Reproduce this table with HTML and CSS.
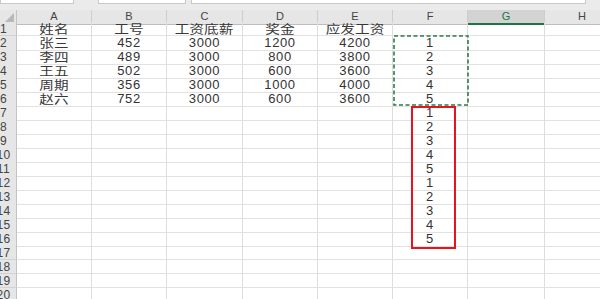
FILE: index.html
```html
<!DOCTYPE html>
<html lang="zh">
<head>
<meta charset="utf-8">
<link rel="stylesheet" href="styles.css">
</head>
<body>
<div class="topbar">
  <div class="box box-name"></div>
  <div class="box box-mid"></div>
  <div class="box box-formula"></div>
</div>
<div class="sheet">
  <div class="row head">
    <span class="corner"><svg width="9" height="9" viewBox="0 0 9 9"><path d="M9 0V9H0Z" fill="#b8b8b8"/></svg></span>
    <span>A</span><span>B</span><span>C</span><span>D</span><span>E</span><span>F</span><span class="sel">G</span><span>H</span>
  </div>
  <div class="row"><span class="rh">1</span><span class="zh"><b>姓名</b></span><span class="zh"><b>工号</b></span><span class="zh"><b>工资底薪</b></span><span class="zh"><b>奖金</b></span><span class="zh"><b>应发工资</b></span><span></span><span></span><span></span></div>
  <div class="row"><span class="rh">2</span><span class="zh"><b>张三</b></span><span>452</span><span>3000</span><span>1200</span><span>4200</span><span>1</span><span></span><span></span></div>
  <div class="row"><span class="rh">3</span><span class="zh"><b>李四</b></span><span>489</span><span>3000</span><span>800</span><span>3800</span><span>2</span><span></span><span></span></div>
  <div class="row"><span class="rh">4</span><span class="zh"><b>王五</b></span><span>502</span><span>3000</span><span>600</span><span>3600</span><span>3</span><span></span><span></span></div>
  <div class="row"><span class="rh">5</span><span class="zh"><b>周期</b></span><span>356</span><span>3000</span><span>1000</span><span>4000</span><span>4</span><span></span><span></span></div>
  <div class="row"><span class="rh">6</span><span class="zh"><b>赵六</b></span><span>752</span><span>3000</span><span>600</span><span>3600</span><span>5</span><span></span><span></span></div>
  <div class="row"><span class="rh">7</span><span></span><span></span><span></span><span></span><span></span><span>1</span><span></span><span></span></div>
  <div class="row"><span class="rh">8</span><span></span><span></span><span></span><span></span><span></span><span>2</span><span></span><span></span></div>
  <div class="row"><span class="rh">9</span><span></span><span></span><span></span><span></span><span></span><span>3</span><span></span><span></span></div>
  <div class="row"><span class="rh">10</span><span></span><span></span><span></span><span></span><span></span><span>4</span><span></span><span></span></div>
  <div class="row"><span class="rh">11</span><span></span><span></span><span></span><span></span><span></span><span>5</span><span></span><span></span></div>
  <div class="row"><span class="rh">12</span><span></span><span></span><span></span><span></span><span></span><span>1</span><span></span><span></span></div>
  <div class="row"><span class="rh">13</span><span></span><span></span><span></span><span></span><span></span><span>2</span><span></span><span></span></div>
  <div class="row"><span class="rh">14</span><span></span><span></span><span></span><span></span><span></span><span>3</span><span></span><span></span></div>
  <div class="row"><span class="rh">15</span><span></span><span></span><span></span><span></span><span></span><span>4</span><span></span><span></span></div>
  <div class="row"><span class="rh">16</span><span></span><span></span><span></span><span></span><span></span><span>5</span><span></span><span></span></div>
  <div class="row"><span class="rh">17</span><span></span><span></span><span></span><span></span><span></span><span></span><span></span><span></span></div>
  <div class="row"><span class="rh">18</span><span></span><span></span><span></span><span></span><span></span><span></span><span></span><span></span></div>
  <div class="row"><span class="rh">19</span><span></span><span></span><span></span><span></span><span></span><span></span><span></span><span></span></div>
  <div class="row"><span class="rh">20</span><span></span><span></span><span></span><span></span><span></span><span></span><span></span><span></span></div>

  <svg class="copy-marquee" width="76" height="71" viewBox="0 0 76 71"><rect x="1" y="1" width="74" height="69" fill="none" stroke="#2f7a4c" stroke-width="1.6" stroke-dasharray="4 2.5"/></svg>
  <div class="mark-red"></div>
</div>
</body>
</html>
```
FILE: styles.css
```css
html, body {
  margin: 0;
  padding: 0;
  width: 600px;
  height: 299px;
  overflow: hidden;
  background: #ffffff;
}

.topbar {
  height: 10px;
  background: #ebebeb;
  display: flex;
  align-items: flex-start;
}
.box {
  height: 4px;
  background: #ffffff;
  border: 1px solid #c9c9c9;
  border-top: none;
  box-sizing: border-box;
}
.box-name { width: 74px; }
.box-mid { width: 88px; margin-left: 24px; }
.box-formula { width: 395px; margin-left: 5px; }

.sheet {
  position: relative;
  margin-left: -9px;
  font-family: "Liberation Sans", Arial, "Noto Sans CJK SC", sans-serif;
  color: #333333;
}

.row {
  display: grid;
  grid-template-columns: 26px 75px 75px 76px 75px 75px 75px 77px 75px;
  height: 14px;
}
.row > span {
  box-sizing: border-box;
  border-right: 1px solid #dddddd;
  border-bottom: 1px solid #e2e2e2;
  text-align: center;
  font-size: 13px;
  line-height: 14px;
  white-space: nowrap;
  letter-spacing: 0.6px;
}
.row > .zh {
  font-family: "Noto Sans CJK SC", sans-serif;
  font-size: 12px;
  letter-spacing: 0;
  line-height: 13px;
  color: #383838;
}
.zh > b {
  display: inline-block;
  font-weight: 400;
  transform: scaleX(1.22);
  line-height: 13px;
}

.row > .rh {
  background: #e6e6e6;
  border-right: 1px solid #c4c4c4;
  border-bottom: 1px solid #d2d2d2;
  color: #444444;
  font-size: 12px;
  letter-spacing: 0.4px;
  overflow: hidden;
}

.head {
  height: 12px;
}
.head > span {
  background: #e6e6e6;
  border-right: 1px solid #cdcdcd;
  border-bottom: 1px solid #bdbdbd;
  color: #444444;
  font-size: 11px;
  line-height: 13px;
  letter-spacing: 0;
}
.head > .corner {
  display: flex;
  justify-content: flex-end;
  align-items: flex-end;
  padding: 0 2px 2px 0;
  border-right: 1px solid #c4c4c4;
}
.head > .sel {
  background: #d3d3d3;
  border-bottom: 2px solid #217346;
  color: #217346;
}

.copy-marquee {
  position: absolute;
  left: 402px;
  top: 25px;
}
.mark-red {
  position: absolute;
  left: 420px;
  top: 96px;
  width: 45px;
  height: 143px;
  box-sizing: border-box;
  border: 2px solid #e8141c;
}
```
